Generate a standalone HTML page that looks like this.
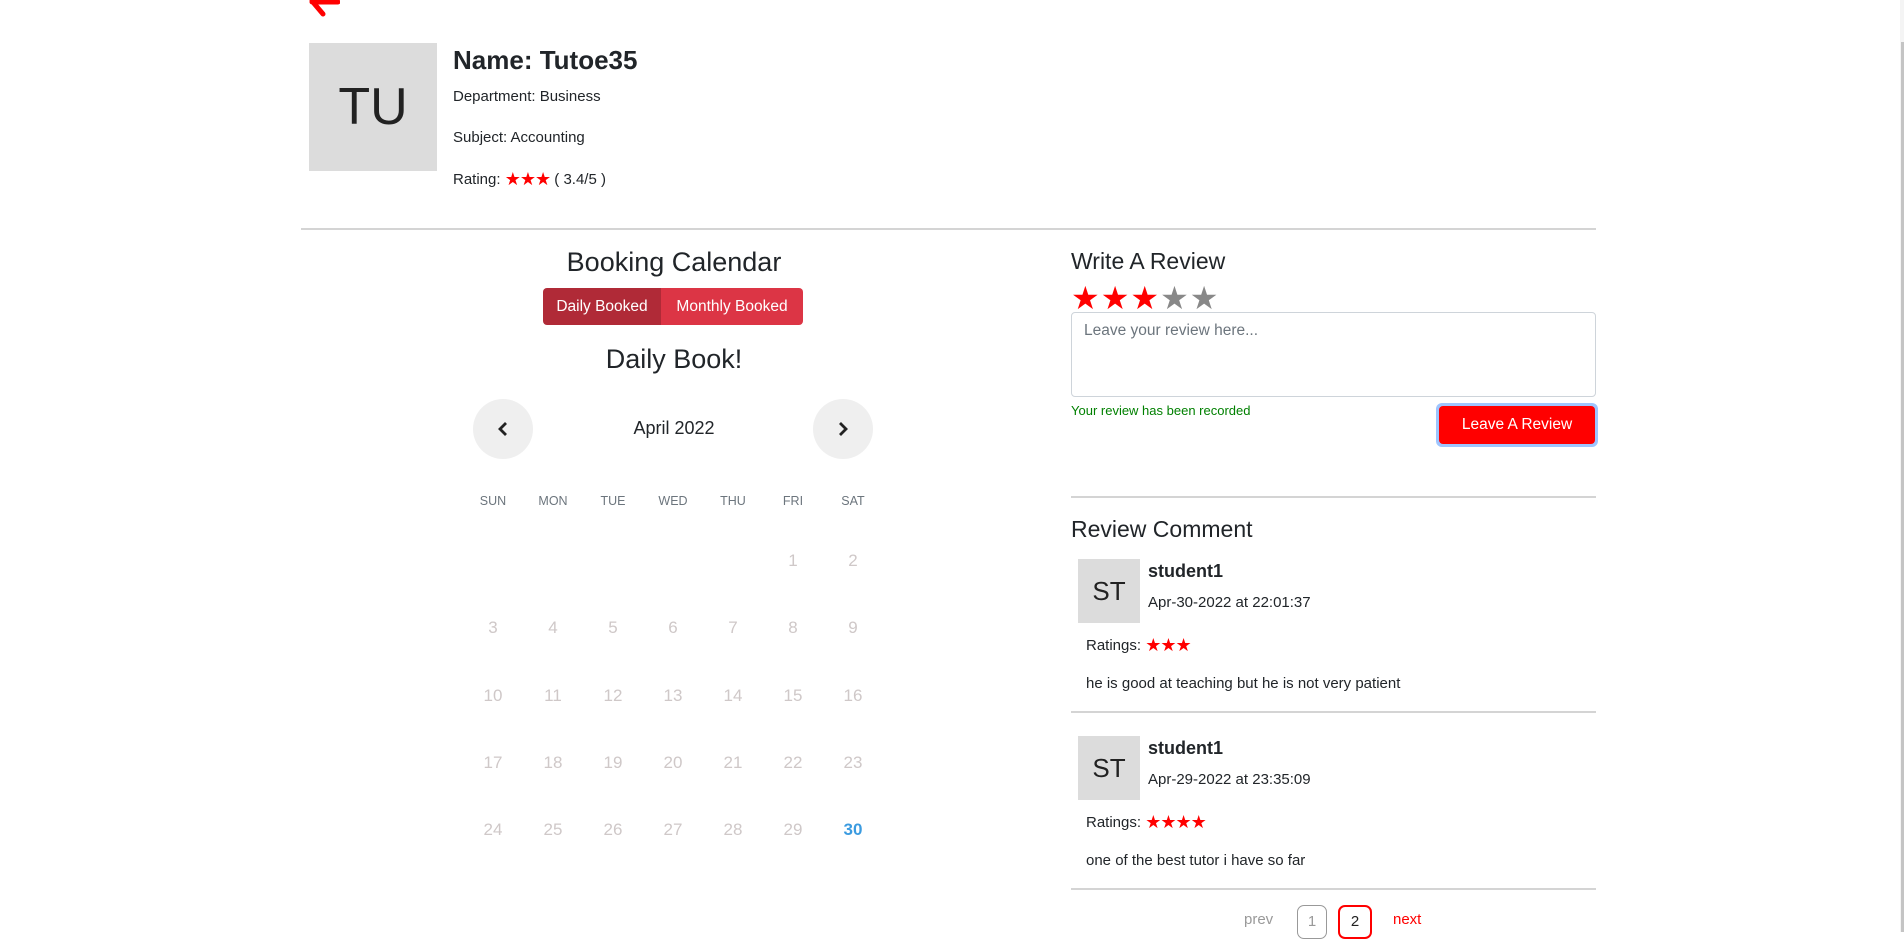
<!DOCTYPE html>
<html><head><meta charset="utf-8"><style>
*{box-sizing:border-box;margin:0;padding:0}
body{width:1904px;height:932px;overflow:hidden;background:#fff;font-family:"Liberation Sans",sans-serif;color:#212529;position:relative}
.a{position:absolute;white-space:nowrap}
.hr{position:absolute;height:2px;background:#d4d4d4}
.day{position:absolute;width:40px;text-align:center;font-size:17px;color:#cfc8c8;font-weight:300;transform:translate(-20px,-50%)}
.wd{position:absolute;width:50px;text-align:center;font-size:12.5px;color:#6c757d;transform:translate(-25px,-50%)}
.rs{color:#f00;font-size:18px;letter-spacing:-1px;vertical-align:-1px}
</style></head><body>
<svg class="a" style="left:306px;top:0" width="34" height="18" viewBox="0 0 34 18"><path d="M32 2H6M6 1l11 13" stroke="#f00" stroke-width="5" fill="none" stroke-linecap="round"/></svg>
<div class="a" style="left:309px;top:43px;width:128px;height:128px;background:#dcdcdc;font-size:52px;line-height:128px;text-align:center;color:#222">TU</div>
<div class="a" style="left:453px;top:45px;font-size:26px;font-weight:600">Name: Tutoe35</div>
<div class="a" style="left:453px;top:88px;font-size:15px">Department: Business</div>
<div class="a" style="left:453px;top:129px;font-size:15px">Subject: Accounting</div>
<div class="a" style="left:453px;top:169px;font-size:15px">Rating: <span class="rs">★★★</span> ( 3.4/5 )</div>
<div class="hr" style="left:301px;top:228px;width:1295px"></div>

<div class="a" style="left:474px;width:400px;text-align:center;top:247px;font-size:27px;font-weight:500">Booking Calendar</div>
<div class="a" style="left:543px;top:288px;width:260px;height:37px;border-radius:4px;overflow:hidden;display:flex;font-size:15.5px;color:#fff">
<div style="width:118px;background:#b02a37;text-align:center;line-height:37px">Daily Booked</div>
<div style="flex:1;background:#dc3545;text-align:center;line-height:37px">Monthly Booked</div></div>
<div class="a" style="left:474px;width:400px;text-align:center;top:344px;font-size:27px;font-weight:500">Daily Book!</div>
<div class="a" style="left:473px;top:399px;width:60px;height:60px;border-radius:50%;background:#efefef"></div>
<div class="a" style="left:813px;top:399px;width:60px;height:60px;border-radius:50%;background:#efefef"></div>
<svg class="a" style="left:495px;top:421px" width="16" height="16" viewBox="0 0 16 16"><path d="M11 2L5 8l6 6" stroke="#222" stroke-width="2.8" fill="none"/></svg>
<svg class="a" style="left:835px;top:421px" width="16" height="16" viewBox="0 0 16 16"><path d="M5 2l6 6-6 6" stroke="#222" stroke-width="2.8" fill="none"/></svg>
<div class="a" style="left:574px;width:200px;text-align:center;top:418px;font-size:18px;font-weight:500">April 2022</div>
<div class="wd" style="left:493px;top:501px">SUN</div><div class="wd" style="left:553px;top:501px">MON</div><div class="wd" style="left:613px;top:501px">TUE</div><div class="wd" style="left:673px;top:501px">WED</div><div class="wd" style="left:733px;top:501px">THU</div><div class="wd" style="left:793px;top:501px">FRI</div><div class="wd" style="left:853px;top:501px">SAT</div>
<div class="day" style="left:793px;top:561px">1</div><div class="day" style="left:853px;top:561px">2</div>
<div class="day" style="left:493px;top:628px">3</div><div class="day" style="left:553px;top:628px">4</div><div class="day" style="left:613px;top:628px">5</div><div class="day" style="left:673px;top:628px">6</div><div class="day" style="left:733px;top:628px">7</div><div class="day" style="left:793px;top:628px">8</div><div class="day" style="left:853px;top:628px">9</div>
<div class="day" style="left:493px;top:696px">10</div><div class="day" style="left:553px;top:696px">11</div><div class="day" style="left:613px;top:696px">12</div><div class="day" style="left:673px;top:696px">13</div><div class="day" style="left:733px;top:696px">14</div><div class="day" style="left:793px;top:696px">15</div><div class="day" style="left:853px;top:696px">16</div>
<div class="day" style="left:493px;top:763px">17</div><div class="day" style="left:553px;top:763px">18</div><div class="day" style="left:613px;top:763px">19</div><div class="day" style="left:673px;top:763px">20</div><div class="day" style="left:733px;top:763px">21</div><div class="day" style="left:793px;top:763px">22</div><div class="day" style="left:853px;top:763px">23</div>
<div class="day" style="left:493px;top:830px">24</div><div class="day" style="left:553px;top:830px">25</div><div class="day" style="left:613px;top:830px">26</div><div class="day" style="left:673px;top:830px">27</div><div class="day" style="left:733px;top:830px">28</div><div class="day" style="left:793px;top:830px">29</div><div class="day" style="left:853px;top:830px;color:#3b9be0;font-weight:700">30</div>

<div class="a" style="left:1071px;top:248px;font-size:23px;font-weight:500">Write A Review</div>
<div class="a" style="left:1071px;top:281px;font-size:32px;line-height:34px;letter-spacing:1px"><span style="color:#f00">★★★</span><span style="color:#888">★★</span></div>
<div class="a" style="left:1071px;top:312px;width:525px;height:85px;border:1px solid #ced4da;border-radius:4px;padding:9px 12px;font-size:15.5px;color:#6c757d">Leave your review here...</div>
<div class="a" style="left:1071px;top:403px;font-size:13px;color:#008000">Your review has been recorded</div>
<div class="a" style="left:1436px;top:403px;width:162px;height:44px;border-radius:6px;background:#9ec5fe;padding:3px"><div style="background:#f00;color:#fff;height:38px;border-radius:4px;font-size:15.5px;line-height:38px;text-align:center">Leave A Review</div></div>
<div class="hr" style="left:1071px;top:496px;width:525px"></div>
<div class="a" style="left:1071px;top:516px;font-size:23px;font-weight:500">Review Comment</div>

<div class="a" style="left:1078px;top:559px;width:62px;height:64px;background:#dcdcdc;font-size:26px;line-height:64px;text-align:center;color:#222">ST</div>
<div class="a" style="left:1148px;top:561px;font-size:18px;font-weight:600">student1</div>
<div class="a" style="left:1148px;top:594px;font-size:15px">Apr-30-2022 at 22:01:37</div>
<div class="a" style="left:1086px;top:635px;font-size:15px">Ratings: <span class="rs">★★★</span></div>
<div class="a" style="left:1086px;top:675px;font-size:15px">he is good at teaching but he is not very patient</div>
<div class="hr" style="left:1071px;top:711px;width:525px"></div>

<div class="a" style="left:1078px;top:736px;width:62px;height:64px;background:#dcdcdc;font-size:26px;line-height:64px;text-align:center;color:#222">ST</div>
<div class="a" style="left:1148px;top:738px;font-size:18px;font-weight:600">student1</div>
<div class="a" style="left:1148px;top:771px;font-size:15px">Apr-29-2022 at 23:35:09</div>
<div class="a" style="left:1086px;top:812px;font-size:15px">Ratings: <span class="rs">★★★★</span></div>
<div class="a" style="left:1086px;top:852px;font-size:15px">one of the best tutor i have so far</div>
<div class="hr" style="left:1071px;top:888px;width:525px"></div>

<div class="a" style="left:1244px;top:911px;font-size:15px;color:#999">prev</div>
<div class="a" style="left:1297px;top:905px;width:30px;height:34px;border:1px solid #999;border-radius:7px;text-align:center;line-height:32px;font-size:15px;color:#999">1</div>
<div class="a" style="left:1338px;top:905px;width:34px;height:34px;border:2px solid #f00;border-radius:7px;text-align:center;line-height:30px;font-size:15px;color:#222">2</div>
<div class="a" style="left:1393px;top:911px;font-size:15px;color:#f00">next</div>
<div class="a" style="left:1900px;top:0;width:4px;height:932px;background:#f4f4f4"></div>
<div class="a" style="left:1901px;top:42px;width:3px;height:890px;background:#c4c4c4"></div>
</body></html>
